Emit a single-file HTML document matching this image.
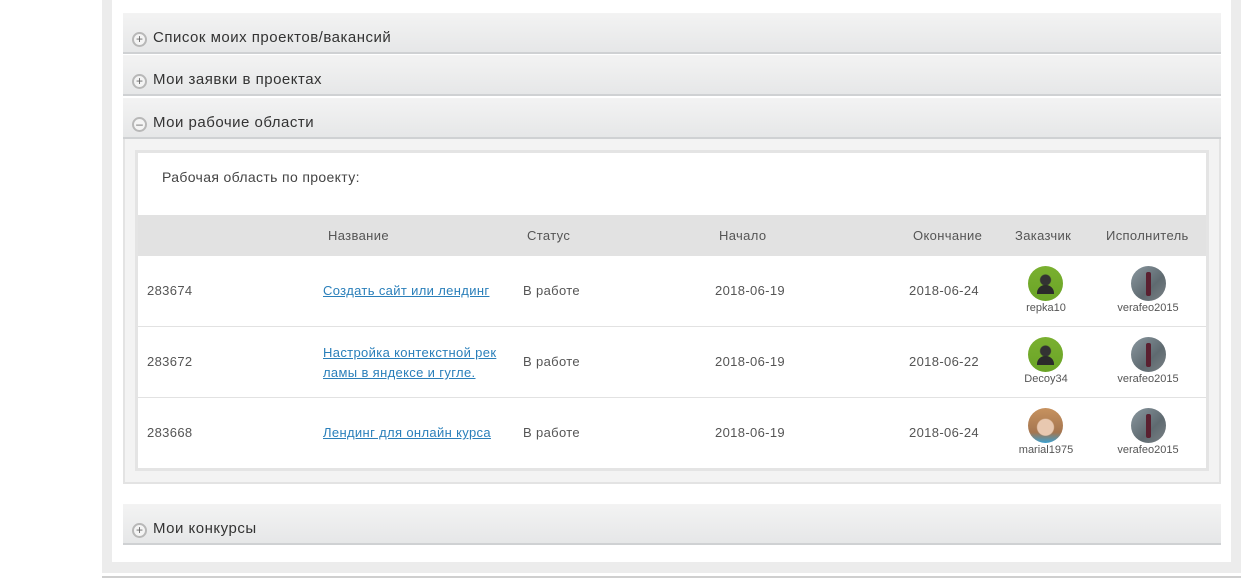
<!DOCTYPE html>
<html><head><meta charset="utf-8"><style>
*{margin:0;padding:0;box-sizing:border-box}
body{width:1241px;height:579px;background:#fff;font-family:"Liberation Sans",sans-serif;position:relative;overflow:hidden;color:#444}
.a{position:absolute}
.hdr{position:absolute;left:123px;width:1098px;height:41px;background:linear-gradient(#f3f3f3,#e6e7e8);border-bottom:2px solid #cfd1d3;font-size:15px;color:#333;letter-spacing:0.5px}
.hdr span{position:absolute;left:30px;top:16px}
.ic{position:absolute;left:9px;top:19px;width:15px;height:15px;border-radius:50%;background:#f4f4f4;border:2px solid #b8b8b8;font-size:12px;line-height:10px;text-align:center;color:#666;letter-spacing:0}
.t{position:absolute;font-size:13px;color:#555;letter-spacing:0.35px}
.lk{color:#2a7fba;text-decoration:underline}
.av{position:absolute;width:35px;height:35px;border-radius:50%}
.g{background:radial-gradient(circle at 50% 40%,#333 0 5px,transparent 6px),linear-gradient(#7ab030,#6aa426)}
.g::after{content:"";position:absolute;left:9px;top:19px;width:17px;height:9px;background:#2b2b2b;border-radius:8px 8px 0 0}
.v{background:linear-gradient(135deg,#8a98a0,#5f6a70 60%,#7b8286)}
.v::after{content:"";position:absolute;left:15px;top:6px;width:5px;height:24px;background:#5a2030;border-radius:2px}
.m{background:radial-gradient(circle at 50% 55%,#e8c8b0 0 8px,transparent 9px),linear-gradient(#c7925f,#a57650 70%,#3aa0d0)}
.u{position:absolute;font-size:11px;color:#555;width:90px;text-align:center}
</style></head><body>
<div class="a" style="left:102px;top:0;width:10px;height:573px;background:#ececec"></div>
<div class="a" style="left:1231px;top:0;width:10px;height:573px;background:#ececec"></div>
<div class="a" style="left:102px;top:562px;width:1139px;height:11px;background:#ececec"></div>
<div class="a" style="left:102px;top:576px;width:1139px;height:2px;background:#cfcfcf"></div>

<div class="hdr" style="top:13px"><div class="ic">+</div><span>Список моих проектов/вакансий</span></div>
<div class="hdr" style="top:55px"><div class="ic">+</div><span>Мои заявки в проектах</span></div>
<div class="hdr" style="top:98px"><div class="ic">–</div><span>Мои рабочие области</span></div>

<div class="a" style="left:123px;top:139px;width:1098px;height:345px;background:#f3f3f3;border:2px solid #e3e3e3;border-top:none"></div>
<div class="a" style="left:135px;top:150px;width:1074px;height:321px;background:#fff;border:3px solid #e4e4e4"></div>
<div class="t" style="left:162px;top:169px;font-size:14px;color:#444">Рабочая область по проекту:</div>
<div class="a" style="left:138px;top:215px;width:1068px;height:41px;background:#e2e2e2"></div>
<div class="t" style="left:328px;top:228px">Название</div>
<div class="t" style="left:527px;top:228px">Статус</div>
<div class="t" style="left:719px;top:228px">Начало</div>
<div class="t" style="left:913px;top:228px">Окончание</div>
<div class="t" style="left:1015px;top:228px">Заказчик</div>
<div class="t" style="left:1106px;top:228px">Исполнитель</div>
<div class="a" style="left:138px;top:326px;width:1068px;height:1px;background:#e2e2e2"></div>
<div class="a" style="left:138px;top:397px;width:1068px;height:1px;background:#e2e2e2"></div>

<div class="t" style="left:147px;top:283px">283674</div>
<div class="t lk" style="left:323px;top:283px">Создать сайт или лендинг</div>
<div class="t" style="left:523px;top:283px">В работе</div>
<div class="t" style="left:715px;top:283px">2018-06-19</div>
<div class="t" style="left:909px;top:283px">2018-06-24</div>
<div class="av g" style="left:1028px;top:266px"></div><div class="u" style="left:1001px;top:302px">repka10</div>
<div class="av v" style="left:1131px;top:266px"></div><div class="u" style="left:1103px;top:302px">verafeo2015</div>

<div class="t" style="left:147px;top:354px">283672</div>
<div class="t lk" style="left:323px;top:343px;line-height:20px">Настройка контекстной рек<br>ламы в яндексе и гугле.</div>
<div class="t" style="left:523px;top:354px">В работе</div>
<div class="t" style="left:715px;top:354px">2018-06-19</div>
<div class="t" style="left:909px;top:354px">2018-06-22</div>
<div class="av g" style="left:1028px;top:337px"></div><div class="u" style="left:1001px;top:373px">Decoy34</div>
<div class="av v" style="left:1131px;top:337px"></div><div class="u" style="left:1103px;top:373px">verafeo2015</div>

<div class="t" style="left:147px;top:425px">283668</div>
<div class="t lk" style="left:323px;top:425px">Лендинг для онлайн курса</div>
<div class="t" style="left:523px;top:425px">В работе</div>
<div class="t" style="left:715px;top:425px">2018-06-19</div>
<div class="t" style="left:909px;top:425px">2018-06-24</div>
<div class="av m" style="left:1028px;top:408px"></div><div class="u" style="left:1001px;top:444px">marial1975</div>
<div class="av v" style="left:1131px;top:408px"></div><div class="u" style="left:1103px;top:444px">verafeo2015</div>

<div class="hdr" style="top:504px"><div class="ic">+</div><span>Мои конкурсы</span></div>
</body></html>
